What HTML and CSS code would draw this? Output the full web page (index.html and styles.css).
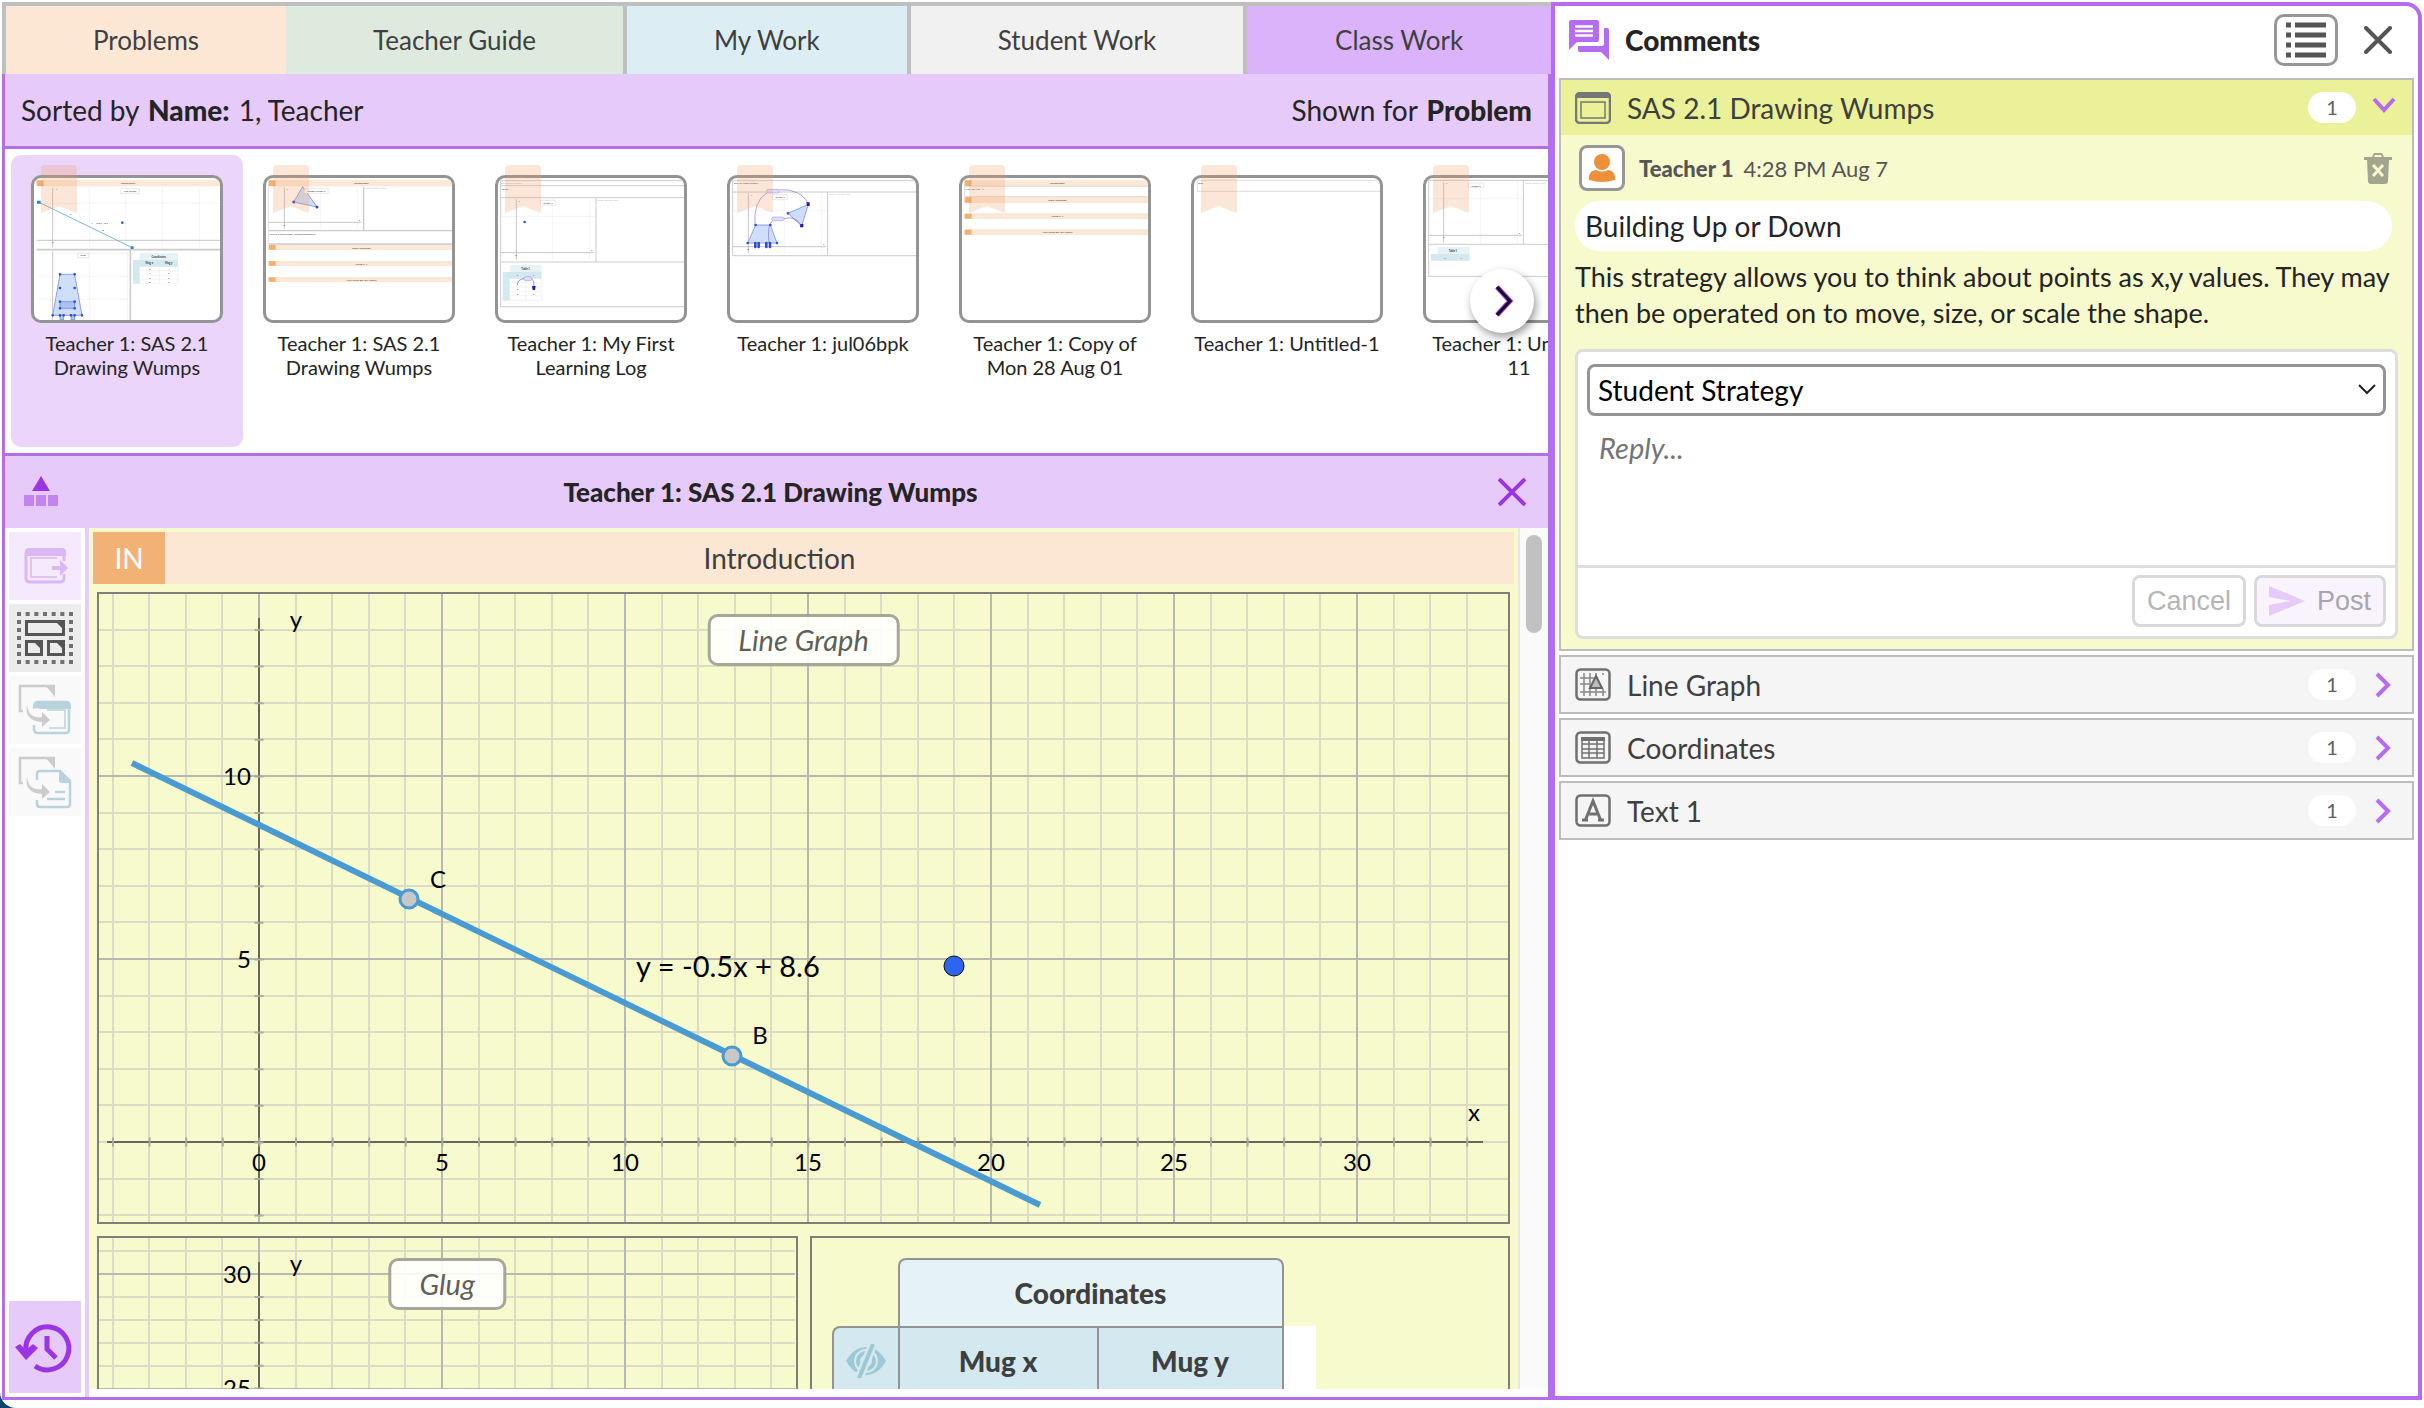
FILE: index.html
```html
<!DOCTYPE html>
<html lang="en">
<head>
<meta charset="utf-8">
<title>Class Work</title>
<link rel="stylesheet" href="styles.css">
</head>
<body>
<div class="app">
  <main class="resources">
    <nav class="tabs">
      <button class="tab tab-problems">Problems</button>
      <button class="tab tab-guide">Teacher Guide</button>
      <button class="tab tab-mywork">My Work</button>
      <button class="tab tab-student">Student Work</button>
      <button class="tab tab-class">Class Work</button>
    </nav>
    <div class="pane">
      <header class="sort-bar">
        <div>Sorted by <b>Name:</b> 1, Teacher</div>
        <div>Shown for <b>Problem</b></div>
      </header>

      <section class="thumbs">
        <button class="thumb selected">
          <span class="frame">
            <svg viewBox="42 54 558 426" aria-hidden="true">
              <path fill="#fce8d6" d="M50 60h550v19H50z"/><path fill="#f3b070" d="M50 61h21v17H50z"/>
              <path stroke="#eee" stroke-width="2" fill="none" d="M208 80v185M317 80v185M427 80v185M538 80v185M50 130h550M208 274v206M50 280h278M50 349h278M50 418h278M322 274v206"/>
              <path stroke="#aaa" stroke-width="2" fill="none" d="M98 84v178M50 241h550M98 274v206"/>
              <path stroke="#ccc" stroke-width="5" fill="none" d="M50 269h550M331 269v211"/>
              <path stroke="#ddd" stroke-width="2" fill="#fff" d="M302 86h56v14h-56zM173 279h33v14h-33z"/>
              <path stroke="#7db6dd" stroke-width="3" d="M53 125l286 139"/>
              <path fill="#2f86c4" d="M51 122h11v9H51zM332 259h9v8h-9z"/>
              <circle cx="307" cy="188" r="4" fill="#2f5fd0"/>
              <path fill="#cfdefb" stroke="#5b7be0" stroke-width="2" d="M120 343h44l22 123H98z"/>
              <path fill="#a9c3f5" stroke="#5b7be0" stroke-width="2" d="M120 425h44v20h-44zM120 466h11v14h-11zM153 466h11v14h-11z"/>
              <path stroke="#2f4fc8" stroke-width="8" stroke-linecap="round" d="M120 343h0M164 343h0M120 384h0M164 384h0M120 425h0M164 425h0M120 445h0M164 445h0M98 466h0M186 466h0M120 466h0M131 466h0M153 466h0M164 466h0"/>
              <path fill="#e5f2f6" d="M359 280h115v20H359z"/><path fill="#d3e9ef" d="M339 300h135v20H339zM339 320h20v51h-20z"/>
              <path stroke="#ddd" stroke-width="1" fill="none" d="M359 332h115M359 346h115M359 358h115M359 371h115M418 300v71M474 320v51"/>
              <g class="mini" text-anchor="middle"><text x="324" y="72">Introduction</text><text x="330" y="96">Line Graph</text><text x="239" y="192">y = -0.5x + 8.6</text><text x="189" y="289">Glug</text><text x="152" y="165">C</text><text x="249" y="214">B</text><text x="110" y="90">y</text><text x="98" y="250">0</text>
              <g font-weight="700"><text x="416" y="293">Coordinates</text><text x="388" y="312">Mug x</text><text x="446" y="312">Mug y</text></g>
              <text x="389" y="330">0</text><text x="446" y="330">4</text><text x="389" y="342">4</text><text x="446" y="342">5</text><text x="389" y="356">5</text><text x="446" y="356">2</text><text x="389" y="369">8</text><text x="446" y="369">2</text></g>
            </svg>
          </span>
          <svg class="ribbon" viewBox="0 0 36 48" aria-hidden="true"><path d="M4 0h28q4 0 4 4v44l-18-7-18 7V4q0-4 4-4z"/></svg>
          <span class="label">Teacher 1: SAS 2.1 Drawing Wumps</span>
        </button>

        <button class="thumb">
          <span class="frame">
            <svg viewBox="738 54 558 426" aria-hidden="true">
              <path fill="#fce8d6" d="M746 60h550v19H746zM746 254h550v16H746zM746 303h550v15H746zM746 351h550v15H746z"/>
              <path fill="#f3b070" d="M746 61h21v17h-21zM746 255h21v14h-21zM746 303h21v14h-21zM746 352h21v13h-21z"/>
              <path stroke="#eee" stroke-width="2" fill="none" d="M902 80v130M1012 80v130"/>
              <path stroke="#aaa" stroke-width="2" fill="none" d="M793 82v124M746 187h278"/>
              <path stroke="#ccc" stroke-width="4" fill="none" d="M746 212h550M1031 80v132M746 252h550"/><path stroke="#ccc" stroke-width="2" d="M745 80v172"/>
              <path fill="#cfdefb" stroke="#5b7be0" stroke-width="2" d="M848 80l43 61-70-15z"/>
              <path stroke="#ddd" stroke-width="2" fill="#fff" d="M853 86h72v14h-72z"/>
              <path stroke="#2f4fc8" stroke-width="9" stroke-linecap="round" d="M821 126h0M891 141h0"/>
              <g class="mini" text-anchor="middle"><text x="1024" y="72">Introduction</text><text x="889" y="96">Shapes Graph 1</text><text x="1024" y="267">Initial Challenge</text><text x="1024" y="314">What If...?</text><text x="1024" y="362">Now What Do You Know?</text><text x="802" y="90">y</text><text x="793" y="197">0</text><text x="1018" y="183">x</text></g>
              <g class="mini"><text x="747" y="224">Here is a new feeder. It was published it.</text><text x="1034" y="87" fill="#bbb">Write answer here</text></g>
            </svg>
          </span>
          <svg class="ribbon" viewBox="0 0 36 48" aria-hidden="true"><path d="M4 0h28q4 0 4 4v44l-18-7-18 7V4q0-4 4-4z"/></svg>
          <span class="label">Teacher 1: SAS 2.1 Drawing Wumps</span>
        </button>

        <button class="thumb">
          <span class="frame">
            <svg viewBox="54 54 558 426" aria-hidden="true">
              <path stroke="#eee" stroke-width="2" fill="none" d="M217 116v186M328 116v186M62 169h284"/>
              <path stroke="#aaa" stroke-width="2" fill="none" d="M109 118v182M62 278h280"/>
              <path stroke="#ccc" stroke-width="3" fill="none" d="M612 62H62v378h550M62 77h550M62 113h550M62 306h550M348 113v193"/>
              <path stroke="#ddd" stroke-width="2" fill="#fff" d="M181 121h46v15h-46z"/>
              <circle cx="134" cy="186" r="4" fill="#2f5fd0"/>
              <path fill="#e5f2f6" d="M90 315h95v21H90z"/><path fill="#d3e9ef" d="M68 336h117v20H68zM68 356h21v66H68z"/>
              <path stroke="#ddd" stroke-width="1" fill="none" d="M89 368h96M89 381h96M89 394h96M89 407h96M89 421h96M137 336v85M185 356v66"/>
              <path stroke="#6b5bd8" stroke-width="2" fill="none" d="M112 376q0-18 20-20M154 356q8 4 8 24"/>
              <rect x="132" y="350" width="23" height="12" rx="5" fill="#e2dcfa" stroke="#6b5bd8"/><path fill="#2616b8" d="M156 378h11l-2 12h-7z"/>
              <g class="mini"><text x="64" y="72">▪ <tspan fill="#bbb">Untitled section</tspan></text><text x="66" y="89">Rules</text><text x="190" y="132">Graph 1</text><text x="350" y="123" fill="#bbb">Write answer here</text><text x="124" y="330" font-weight="700">Table 1</text><text x="110" y="348">x</text><text x="158" y="348">y</text><text x="110" y="391">3</text><text x="110" y="404">5</text><text x="158" y="404">5</text><text x="106" y="288">0</text><text x="333" y="273">x</text><text x="116" y="126">y</text></g>
            </svg>
          </span>
          <svg class="ribbon" viewBox="0 0 36 48" aria-hidden="true"><path d="M4 0h28q4 0 4 4v44l-18-7-18 7V4q0-4 4-4z"/></svg>
          <span class="label">Teacher 1: My First Learning Log</span>
        </button>

        <button class="thumb">
          <span class="frame">
            <svg viewBox="750 54 558 426" aria-hidden="true">
              <path stroke="#eee" stroke-width="2" fill="none" d="M913 98v186M1024 98v186M758 152h284"/>
              <path stroke="#aaa" stroke-width="2" fill="none" d="M805 100v180M758 260h280"/>
              <path stroke="#ccc" stroke-width="3" fill="none" d="M1308 62H758v225h550M758 96h550M1043 96v191"/>
              <path fill="#cfdefb" stroke="#5b7be0" stroke-width="2" d="M827 195h44l20 54h-88zM924 160l61-27-20 65z"/>
              <path stroke="#ddd" stroke-width="2" fill="#fff" d="M878 104h44v15h-44z"/>
              <path stroke="#8a6fe0" stroke-width="2" fill="none" d="M825 195q-6-72 36-96M898 89q64-2 86 40M867 249q-6-54 10-66M912 176q34-10 52 20"/>
              <g fill="#e2dcfa" stroke="#6b5bd8"><rect x="860" y="88" width="38" height="11" rx="5"/><rect x="875" y="171" width="37" height="11" rx="5"/></g>
              <path fill="#2616b8" d="M979 127h10v11h-8zM961 192h9v10h-10z"/>
              <path stroke="#2f4fc8" stroke-width="8" stroke-linecap="round" d="M827 195h0M871 195h0M803 249h0M891 249h0M826 249v12M836 249v12M859 249v12M870 249v12M924 160h0"/>
              <g class="mini"><text x="761" y="72">The ice frog's shapes</text><text x="886" y="115">Graph 1</text><text x="1046" y="105" fill="#bbb">Write answer here</text><text x="802" y="270">0</text><text x="1029" y="256">x</text><text x="812" y="109">y</text></g>
            </svg>
          </span>
          <svg class="ribbon" viewBox="0 0 36 48" aria-hidden="true"><path d="M4 0h28q4 0 4 4v44l-18-7-18 7V4q0-4 4-4z"/></svg>
          <span class="label">Teacher 1: jul06bpk</span>
        </button>

        <button class="thumb">
          <span class="frame">
            <svg viewBox="0 0 558 426" aria-hidden="true">
              <path fill="#fce8d6" d="M8 7h550v17H8zM8 57h550v18H8zM8 106h550v17H8zM8 154h550v17H8z"/>
              <path fill="#f3b070" d="M8 7h21v17H8zM8 58h21v16H8zM8 107h21v15H8zM8 155h21v15H8z"/>
              <path stroke="#ccc" stroke-width="2" fill="none" d="M558 25H8v31h550"/>
              <g class="mini" text-anchor="middle"><text x="286" y="18">Introduction</text><text x="286" y="69">Initial Challenge</text><text x="286" y="117">What If...?</text><text x="286" y="165">Now What Do You Know?</text></g>
              <text class="mini" x="10" y="36">Mon 28 Aug - 1</text>
            </svg>
          </span>
          <svg class="ribbon" viewBox="0 0 36 48" aria-hidden="true"><path d="M4 0h28q4 0 4 4v44l-18-7-18 7V4q0-4 4-4z"/></svg>
          <span class="label">Teacher 1: Copy of Mon 28 Aug 01</span>
        </button>

        <button class="thumb">
          <span class="frame">
            <svg viewBox="0 0 558 426" aria-hidden="true">
              <path stroke="#ccc" stroke-width="2" fill="none" d="M558 7H10v33h548"/>
              <text class="mini" x="12" y="18">Text</text>
            </svg>
          </span>
          <svg class="ribbon" viewBox="0 0 36 48" aria-hidden="true"><path d="M4 0h28q4 0 4 4v44l-18-7-18 7V4q0-4 4-4z"/></svg>
          <span class="label">Teacher 1: Untitled-1</span>
        </button>

        <button class="thumb">
          <span class="frame">
            <svg viewBox="0 0 558 426" aria-hidden="true">
              <path stroke="#eee" stroke-width="2" fill="none" d="M163 8v190M275 8v190M8 62h284"/>
              <path stroke="#aaa" stroke-width="2" fill="none" d="M53 12v182M8 172h280"/>
              <path stroke="#ccc" stroke-width="3" fill="none" d="M558 7H8v288h550M8 199h550M292 7v192"/>
              <path stroke="#ddd" stroke-width="2" fill="#fff" d="M127 15h46v14h-46z"/>
              <path fill="#e5f2f6" d="M35 207h96v21H35z"/><path fill="#d3e9ef" d="M15 228h116v20H15z"/>
              <g class="mini"><text x="136" y="26">Graph 1</text><text x="68" y="221" font-weight="700">Table 1</text><text x="55" y="242">x</text><text x="104" y="242">y</text><text x="296" y="18" fill="#bbb">Write answer here</text><text x="61" y="18">y</text><text x="50" y="181">0</text><text x="278" y="167">x</text></g>
            </svg>
          </span>
          <svg class="ribbon" viewBox="0 0 36 48" aria-hidden="true"><path d="M4 0h28q4 0 4 4v44l-18-7-18 7V4q0-4 4-4z"/></svg>
          <span class="label">Teacher 1: Untitled-11</span>
        </button>
        <button class="next" aria-label="Next documents">
          <svg width="20" height="34" viewBox="0 0 20 34" aria-hidden="true"><path d="M3 3l13 14L3 31" fill="none" stroke="#9a3fe0" stroke-width="5"/><path d="M3 3l13 14L3 31" fill="none" stroke="#180828" stroke-width="3"/></svg>
        </button>
      </section>

      <header class="doc-bar">
        <button class="plain" aria-label="Toggle view">
          <svg width="36" height="32" viewBox="0 0 36 32" aria-hidden="true"><path fill="#9a35e3" d="M18 0l9 15H9z"/><path fill="#c285ef" d="M1 19h10v11H1zM13 19h10v11H13zM25 19h10v11H25z"/></svg>
        </button>
        <h1>Teacher 1: SAS 2.1 Drawing Wumps</h1>
        <button class="plain" aria-label="Close document">
          <svg width="28" height="28" viewBox="0 0 28 28" aria-hidden="true"><path d="M1 1l26 26M27 1L1 27" stroke="#9a35e3" stroke-width="4" fill="none"/></svg>
        </button>
      </header>

      <div class="workspace">
        <aside class="tools">
          <button class="tool tool-open" aria-label="Open document">
            <svg width="72" height="68" viewBox="0 0 72 68" aria-hidden="true"><g fill="none" stroke="#d9b8f5"><path stroke-width="3" d="M55 29v-7q0-4-4-4H21q-4 0-4 4v24q0 4 4 4h30q4 0 4-4v-4"/><path stroke-width="1.6" d="M48 26H22v19h26"/></g><path fill="#d9b8f5" d="M16 24v-4q0-4 4-4h33q4 0 4 4v4zM43 34h8v-6l8 8-8 8v-6h-8z"/></svg>
          </button>
          <button class="tool tool-select" aria-label="Select tiles">
            <svg width="72" height="68" viewBox="0 0 72 68" aria-hidden="true"><g fill="none" stroke="#707070" stroke-width="4"><path stroke-dasharray="4 4.67" d="M8 10h56M8 58h56"/><path stroke-dasharray="4 4" d="M10 8v52M62 8v52"/></g><path fill="none" stroke="#555" stroke-width="3" d="M17.500 17.500h37v13h-37zM17.500 37.500h15v13h-15zM39.500 37.500h15v13h-15z"/><path fill="#555" d="M46 17l9 9v-9zM24 37l9 9v-9zM46 37l9 9v-9z"/></svg>
          </button>
          <button class="tool" aria-label="Copy to workspace">
            <svg width="72" height="68" viewBox="0 0 72 68" aria-hidden="true"><path fill="none" stroke="#ccc" stroke-width="2.500" d="M14 35h-3V10h34"/><path fill="#ccc" d="M36 9h10v12z"/><g fill="none" stroke="#bad2de"><path stroke-width="2.500" d="M25 49v4q0 4 4 4h28q3 0 3-3V30q0-4-3-4H28"/><path stroke-width="1.500" d="M38 34h18v18H40"/></g><path fill="#bad2de" d="M24 33v-3q0-5 5-5h28q5 0 5 5v3H31l-3-1z"/><path fill="#ccc" d="M18 28q1 15 15 13v-5l8 8-8 7v-5Q15 45 18 28z"/></svg>
          </button>
          <button class="tool" aria-label="Copy to document">
            <svg width="72" height="68" viewBox="0 0 72 68" aria-hidden="true"><path fill="none" stroke="#ccc" stroke-width="2.500" d="M14 35h-3V10h34"/><path fill="#ccc" d="M36 9h10v12z"/><path fill="none" stroke="#bad2de" stroke-width="2.500" d="M28 32v-6q0-3 3-3h20l10 10v23q0 3-3 3H31q-3 0-3-3v-4M46 44h10M38 51h18"/><path fill="#bad2de" d="M50 23l12 12H53q-3 0-3-3z"/><path fill="#ccc" d="M18 28q1 15 15 13v-5l8 8-8 7v-5Q15 45 18 28z"/></svg>
          </button>
          <button class="tool tool-history" aria-label="History">
            <svg width="72" height="92" viewBox="0 0 72 92" aria-hidden="true"><path fill="none" stroke="#9a35e3" stroke-width="5" d="M17 50A21.500 21.500 0 1 1 26 65M38 35v13l9 9"/><path fill="#9a35e3" d="M6 46l5-3 6 6 7-6 5 4-12 12z"/></svg>
          </button>
        </aside>

        <div class="document">
          <div class="section-head"><span class="badge">IN</span><h2>Introduction</h2></div>
          <div class="tiles">
            <section class="tile tile-line">
              <svg class="graph" aria-label="Line graph">
                <path class="minor" d="M14 0v628M50 0v628M87 0v628M123 0v628M197 0v628M233 0v628M270 0v628M306 0v628M380 0v628M416 0v628M453 0v628M489 0v628M563 0v628M599 0v628M636 0v628M672 0v628M746 0v628M782 0v628M819 0v628M855 0v628M929 0v628M965 0v628M1002 0v628M1038 0v628M1112 0v628M1148 0v628M1185 0v628M1221 0v628M1295 0v628M1331 0v628M1368 0v628M0 621h1409M0 585h1409M0 548h1409M0 511h1409M0 475h1409M0 438h1409M0 402h1409M0 328h1409M0 292h1409M0 255h1409M0 219h1409M0 145h1409M0 109h1409M0 72h1409M0 36h1409"/>
                <path class="major" d="M160 0v628M343 0v628M526 0v628M709 0v628M892 0v628M1075 0v628M1258 0v628M0 365h1409M0 182h1409"/>
                <path class="axis" d="M160 24v598M8 548h1376"/>
                <path class="tick" d="M13 548h1360M160 35v590"/>
                <g class="num"><text x="160" y="577">0</text><text x="343" y="577">5</text><text x="526" y="577">10</text><text x="709" y="577">15</text><text x="892" y="577">20</text><text x="1075" y="577">25</text><text x="1258" y="577">30</text><text x="138" y="191">10</text><text x="145" y="374">5</text><text x="197" y="34">y</text><text x="1375" y="527">x</text></g>
                <path class="plot" d="M33 169l908 442"/>
                <circle class="pt" cx="310" cy="305" r="9"/><circle class="pt" cx="633" cy="462" r="9"/>
                <circle cx="855" cy="372" r="10" fill="#2d65f0" stroke="#111"/>
                <g class="num"><text x="339" y="294">C</text><text x="661" y="450">B</text></g>
                <text class="eq" x="537" y="383">y = -0.5x + 8.6</text>
              </svg>
              <span class="tile-title">Line Graph</span>
            </section>
            <section class="tile">
              <svg class="graph" aria-label="Glug graph">
                <path class="minor" d="M14 0v400M50 0v400M87 0v400M123 0v400M197 0v400M233 0v400M270 0v400M306 0v400M380 0v400M416 0v400M453 0v400M489 0v400M563 0v400M599 0v400M636 0v400M672 0v400M0 13h696M0 59h696M0 82h696M0 105h696M0 128h696"/>
                <path class="major" d="M160 0v400M343 0v400M526 0v400M0 36h696M0 151h696"/>
                <path class="axis" d="M160 24v376"/>
                <path class="tick tick-short" d="M160 58v340"/>
                <g class="num"><text x="138" y="45">30</text><text x="138" y="159">25</text><text x="197" y="34">y</text></g>
              </svg>
              <span class="tile-title">Glug</span>
            </section>
            <section class="tile tile-table">
              <table>
                <colgroup><col class="c-hide"><col class="c-x"><col class="c-y"><col class="c-end"></colgroup>
                <tr><td></td><th class="t-title" colspan="2">Coordinates</th><td></td></tr>
                <tr class="t-head"><th class="t-eye"><svg width="42" height="34" viewBox="0 0 42 34" aria-label="Hide labels"><path fill="#9fc8d6" d="M1 17Q9 3 21 3t20 14Q33 31 21 31T1 17z"/><circle cx="21" cy="17" r="12" fill="#d3e9ef"/><circle cx="21" cy="17" r="8" fill="none" stroke="#9fc8d6" stroke-width="4"/><path stroke="#d3e9ef" stroke-width="9" d="M28 0L14 34"/><path stroke="#9fc8d6" stroke-width="4" d="M28 0L14 34"/></svg></th><th>Mug x</th><th>Mug y</th><td class="t-blank"></td></tr>
              </table>
            </section>
          </div>
        </div>
        <div class="scroll-track"><div class="scroll-thumb"></div></div>
      </div>
    </div>
  </main>

  <aside class="comments">
    <header class="c-header">
      <svg width="40" height="40" viewBox="0 0 40 40" aria-hidden="true"><path fill="#b56cf2" d="M2 0h26q2 0 2 2v18q0 2-2 2H8l-8 8V2q0-2 2-2zM35 8h3q2 0 2 2v30l-8-8H11q-2 0-2-2v-4h24q2 0 2-2z"/><path stroke="#fff" stroke-width="2.500" d="M6 6.500h18M6 11h18M6 15.500h18"/></svg>
      <h2>Comments</h2>
      <button class="list-btn" aria-label="Comment list"><svg width="42" height="38" viewBox="0 0 42 38" aria-hidden="true"><path stroke="#555" stroke-width="5" d="M1 4h5M10 4h31M1 14h5M10 14h31M1 24h5M10 24h31M1 34h5M10 34h31"/></svg></button>
      <button class="plain" aria-label="Close comments"><svg width="28" height="28" viewBox="0 0 28 28" aria-hidden="true"><path d="M2 2l24 24M26 2L2 26" stroke="#555" stroke-width="4" fill="none" stroke-linecap="round"/></svg></button>
    </header>

    <section class="card card-open">
      <button class="card-head">
        <svg width="36" height="32" viewBox="0 0 36 32" aria-hidden="true"><rect x="1" y="1" width="34" height="30" rx="4" fill="none" stroke="#777" stroke-width="2.500"/><path fill="#777" d="M1 6V4q0-3 3-3h28q3 0 3 3v2z"/><path fill="none" stroke="#777" stroke-width="1.500" d="M6 10h24v16H6z"/></svg>
        <span class="card-name">SAS 2.1 Drawing Wumps</span>
        <span class="count">1</span>
        <svg width="24" height="26" viewBox="0 0 24 26" aria-hidden="true"><path d="M2 4l10 11L22 4" fill="none" stroke="#b56cf2" stroke-width="4"/></svg>
      </button>
      <div class="card-body">
        <div class="byline">
          <span class="avatar"><svg width="28" height="28" viewBox="0 0 28 28" aria-hidden="true"><circle cx="14" cy="8" r="8" fill="#ee8f3a"/><path fill="#ee8f3a" d="M1 26q-1-9 7-10 6 3 12 0 8 1 7 10-13 4-26 0z"/></svg></span>
          <b>Teacher 1</b><span>4:28 PM Aug 7</span>
          <button class="plain trash" aria-label="Delete comment"><svg width="28" height="31" viewBox="0 0 28 31" aria-hidden="true"><path fill="#a3a68e" d="M0 4h8l2-4h8l2 4h8v3H0zM3 7h22l-1 21q0 3-3 3H7q-3 0-3-3z"/><path fill="#f7facd" d="M11 2h6l1 2h-8z"/><path stroke="#f7facd" stroke-width="3" d="M9 12l10 11M19 12L9 23"/></svg></button>
        </div>
        <div class="strategy">Building Up or Down</div>
        <p class="message">This strategy allows you to think about points as x,y values. They may then be operated on to move, size, or scale the shape.</p>
        <form class="reply">
          <div class="reply-edit">
            <div class="select-wrap">
              <select aria-label="Strategy"><option>Student Strategy</option></select>
              <svg width="18" height="12" viewBox="0 0 18 12" aria-hidden="true"><path d="M1 1l8 8 8-8" fill="none" stroke="#222" stroke-width="2"/></svg>
            </div>
            <textarea aria-label="Reply" placeholder="Reply..."></textarea>
          </div>
          <div class="reply-actions">
            <button type="button" class="cancel">Cancel</button>
            <button type="button" class="post"><svg width="36" height="30" viewBox="0 0 36 30" aria-hidden="true"><path fill="#e6cafa" d="M0 0l36 15L0 30V19l22-4L0 11z"/></svg>Post</button>
          </div>
        </form>
      </div>
    </section>

    <section class="card"><button class="card-head">
      <svg width="36" height="33" viewBox="0 0 36 33" aria-hidden="true"><rect x="1.500" y="1.500" width="33" height="30" rx="4" fill="none" stroke="#707070" stroke-width="2.500"/><path stroke="#888" stroke-width="1.500" d="M9 5v23M15 5v23M21 21v7M28 5v2M28 21v7M21 5v4M5 10h14M5 16h9M5 24h26"/><path fill="#bbb" stroke="#666" stroke-width="2" d="M21 8l6 12H15z"/></svg>
      <span class="card-name">Line Graph</span><span class="count">1</span>
      <svg width="24" height="26" viewBox="0 0 24 26" aria-hidden="true"><path d="M5 2l11 11L5 24" fill="none" stroke="#b56cf2" stroke-width="4"/></svg>
    </button></section>
    <section class="card"><button class="card-head">
      <svg width="36" height="33" viewBox="0 0 36 33" aria-hidden="true"><rect x="1.500" y="1.500" width="33" height="30" rx="4" fill="none" stroke="#707070" stroke-width="2.500"/><path fill="none" stroke="#707070" stroke-width="1.500" d="M7 7v20h22V7M7 13h22M7 18h22M7 22h22M7 27h22M14 8v19M22 8v19"/><path fill="#707070" d="M6 6h24v4H6z"/></svg>
      <span class="card-name">Coordinates</span><span class="count">1</span>
      <svg width="24" height="26" viewBox="0 0 24 26" aria-hidden="true"><path d="M5 2l11 11L5 24" fill="none" stroke="#b56cf2" stroke-width="4"/></svg>
    </button></section>
    <section class="card"><button class="card-head">
      <svg width="36" height="33" viewBox="0 0 36 33" aria-hidden="true"><rect x="1.500" y="1.500" width="33" height="30" rx="4" fill="none" stroke="#707070" stroke-width="2.500"/><path fill="none" stroke="#707070" stroke-width="3" d="M10 27l8-20 8 20M13 20h10M7 26h6M23 26h6"/></svg>
      <span class="card-name">Text 1</span><span class="count">1</span>
      <svg width="24" height="26" viewBox="0 0 24 26" aria-hidden="true"><path d="M5 2l11 11L5 24" fill="none" stroke="#b56cf2" stroke-width="4"/></svg>
    </button></section>
  </aside>
</div>
</body>
</html>
```
FILE: styles.css
```css
* { box-sizing: border-box; }
body {
  margin: 0;
  background: #0b4568;
  font-family: Lato, "Liberation Sans", sans-serif;
  font-size: 28px;
  color: #242424;
}
button, select, textarea { font: inherit; color: inherit; margin: 0; }
button { cursor: pointer; border: 0; background: none; padding: 0; }
h1, h2, p { margin: 0; font-size: 28px; }
b, th { font-weight: 900; }
svg { display: block; flex: none; }
.plain { display: flex; }

.app {
  display: grid;
  grid-template-columns: minmax(0, 1549fr) minmax(0, 871fr);
  height: 100vh;
  padding: 2px 2px 8px;
  background: #fff;
  border-bottom-left-radius: 16px;
}

/* Left side: tabs, document list and open document */
.resources { min-height: 0; display: flex; flex-direction: column; }
.tabs { display: flex; height: 72px; border-top: 4px solid #bfbfbf; }
.tab { padding: 0 87px; font-size: 26px; color: #3f3f3f; border-left: 4px solid #bfbfbf; white-space: nowrap; }
.tab-problems { background: #fce7d5; }
.tab-guide { background: #dfeadf; border-left: 0; }
.tab-mywork { background: #dcedf3; }
.tab-student { background: #f1f1f1; }
.tab-class { background: #dab3fa; flex: 1; }

.pane {
  flex: 1; min-height: 0; display: flex; flex-direction: column;
  border: solid #b56ee9; border-width: 0 3px 3px;
}
.sort-bar {
  display: flex; justify-content: space-between; align-items: center;
  height: 75px; padding: 0 16px; background: #e6cafa; border-bottom: 3px solid #b56ee9;
}
.sort-bar b { margin: 0 2px; }
.sort-bar div:last-child b { margin-right: 0; }

.thumbs {
  position: relative; display: flex; height: 307px; padding: 6px; overflow: hidden;
  border-bottom: 3px solid #b56ee9;
}
.thumb {
  position: relative; flex: none; width: 232px; height: 292px; padding: 20px;
  display: flex; flex-direction: column; align-items: center; gap: 8px; border-radius: 10px;
}
.thumb.selected { background: #ebd5fb; }
.frame { width: 192px; height: 148px; border: 3px solid #949494; border-radius: 10px; background: #fff; overflow: hidden; }
.frame svg { width: 186px; height: 142px; }
.ribbon { position: absolute; left: 30px; top: 10px; width: 36px; height: 48px; fill: #f0965a; fill-opacity: .24; }
.mini { font-size: 8px; fill: #333; }
.label { width: 192px; font-size: 20px; line-height: 24px; text-align: center; }
.next {
  position: absolute; right: 14px; top: 120px; width: 64px; height: 64px; border-radius: 50%;
  background: #fff; box-shadow: 2px 4px 8px rgba(0, 0, 0, .4);
  display: flex; align-items: center; justify-content: center; padding-left: 4px;
}

.doc-bar { display: flex; align-items: center; justify-content: space-between; height: 72px; padding: 0 22px 0 18px; background: #e6cafa; }
.doc-bar h1 { font-size: 26px; font-weight: 900; margin-right: 16px; }

.workspace { flex: 1; min-height: 0; display: flex; }
.tools {
  width: 84px; flex: none; padding: 4px; display: flex; flex-direction: column; gap: 4px;
  border-right: 4px solid #e6cdf8;
}
.tool { width: 72px; height: 68px; background: #f9f9f9; }
.tool-open { background: #f5eafd; }
.tool-select { background: #ececec; }
.tool-history { height: 92px; margin-top: auto; background: #e6cafa; }

.document { flex: 1; min-width: 0; margin-bottom: 8px; padding: 4px; background: #f7facd; overflow: hidden; }
.section-head { display: flex; height: 52px; background: #fce7d5; }
.badge { width: 72px; background: #f3b275; color: #fff; display: grid; place-items: center; }
.section-head h2 { flex: 1; display: grid; place-items: center; font-weight: 400; color: #3f3f3f; padding-right: 120px; }
.tiles { display: grid; grid-template-columns: 1fr 1fr; gap: 12px; padding: 8px 4px; }
.tile { position: relative; height: 400px; border: 2px solid #7f7f78; overflow: hidden; }
.tile-line { grid-column: 1 / -1; height: 632px; }
.graph { width: 100%; height: 100%; }
.tile-title {
  position: absolute; left: 50%; top: 20px; transform: translateX(-50%);
  height: 52px; padding: 0 28px; line-height: 46px; white-space: nowrap;
  font-size: 29px; font-style: italic; color: #5f5f58; background: rgba(255, 255, 255, .9);
  border: 3px solid #a6a79a; border-radius: 10px;
}
.minor, .major, .axis { fill: none; stroke: #dbdcc6; stroke-width: 2; }
.major { stroke: #b7b8ae; }
.axis { stroke: #66665c; }
.tick { fill: none; stroke: #a9aaa0; stroke-width: 9; stroke-dasharray: 2 34.6; }
.tick-short { stroke-dasharray: 2 20.9; }
.num { font-size: 24px; text-anchor: middle; fill: #000; }
.eq { font-size: 29px; fill: #000; }
.plot { stroke: #4a9bd1; stroke-width: 6; fill: none; }
.pt { fill: #c8c8c8; stroke: #4a9bd1; stroke-width: 3; }

.tile-table { padding: 20px; }
.tile-table table { border-collapse: separate; border-spacing: 0; table-layout: fixed; width: 484px; color: #3f3f3f; }
.c-hide { width: 66px; } .c-x { width: 199px; } .c-y { width: 187px; } .c-end { width: 32px; }
.tile-table td, .tile-table th { padding: 0; height: 68px; }
.tile-table .t-title { background: #e5f2f6; border: 2px solid #949494; border-bottom: 0; border-radius: 8px 8px 0 0; }
.t-head th { background: #d3e9ef; border: solid #949494; border-width: 2px 0 0 2px; }
.t-head th:nth-child(3) { border-right-width: 2px; }
.t-head .t-eye { border-top-left-radius: 8px; }
.t-eye svg { margin: auto; }
.t-blank { background: #fff; }

.scroll-track { width: 30px; flex: none; margin-bottom: 8px; padding: 7px 6px; background: #fafafa; border-left: 2px solid #e8e8e8; }
.scroll-thumb { width: 16px; height: 98px; border-radius: 8px; background: #c1c1c1; }

/* Right side: comments */
.comments {
  padding: 0 4px; display: flex; flex-direction: column; gap: 4px;
  border: 4px solid #b56cf2; border-top-right-radius: 16px;
}
.c-header { display: flex; align-items: center; height: 68px; padding: 0 22px 0 10px; }
.c-header h2 { margin-left: 16px; font-weight: 900; }
.list-btn {
  margin: 0 26px 0 auto; width: 64px; height: 52px; border: 3px solid #979797; border-radius: 10px;
  display: grid; place-items: center;
}
.card { border: 2px solid #bdbdbd; background: #f5f5f5; }
.card-open { background: #f7facd; }
.card-head { display: flex; align-items: center; width: 100%; height: 55px; padding: 0 16px 0 14px; color: #3f3f3f; }
.card-open .card-head { background: #eaf198; }
.card-name { margin-left: 16px; }
.count {
  margin: 0 16px 0 auto; width: 48px; height: 31px; border-radius: 16px; background: #fff;
  font-size: 20px; line-height: 31px; text-align: center; color: #5f5f5f;
}
.card-body { padding: 10px 0 10px 14px; }
.byline { display: flex; align-items: center; gap: 10px; margin: 0 20px 10px 4px; font-size: 22px; color: #555; }
.avatar { width: 46px; height: 46px; margin-right: 4px; border: 3px solid #979797; border-radius: 8px; background: #fff; display: grid; place-items: center; }
.trash { margin-left: auto; }
.strategy { height: 50px; margin-right: 20px; padding: 0 10px; line-height: 50px; background: #fff; border-radius: 25px; }
.message { margin: 8px 0 18px; font-size: 27px; line-height: 36px; }
.reply { margin-right: 14px; background: #fff; border: 3px solid #dedede; border-radius: 8px; }
.reply-edit { padding: 12px 9px 0; height: 213px; }
.select-wrap { position: relative; }
.select-wrap svg { position: absolute; right: 10px; top: 20px; pointer-events: none; }
select { appearance: none; width: 100%; height: 52px; padding: 0 8px; color: #000; background: #fff; border: 3px solid #949494; border-radius: 8px; display: block; }
textarea { display: block; width: 100%; height: 140px; padding: 14px 12px; border: 0; outline: 0; resize: none; background: transparent; }
textarea::placeholder { font-size: 29px; font-style: italic; color: #757575; opacity: 1; }
.reply-actions { display: flex; justify-content: flex-end; gap: 8px; padding: 7px 9px 9px; border-top: 3px solid #dedede; }
.reply-actions button {
  height: 52px; padding: 0 12px; font-family: "Liberation Sans", sans-serif; font-size: 27px;
  color: #b5b5b5; border: 3px solid #d9d9d9; border-radius: 8px;
}
.reply-actions .post { display: flex; align-items: center; gap: 12px; background: #f9f3fe; color: #a9a5ac; }
```
